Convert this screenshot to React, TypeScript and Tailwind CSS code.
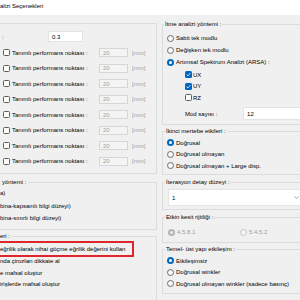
import React from "react";

const T = "font-['Liberation_Sans',Arial,sans-serif] text-[6px] leading-[8px] text-black";

function Radio({ s }: { s: "on" | "off" | "don" | "doff" }) {
  if (s === "on")
    return (
      <span className="flex h-[7px] w-[7px] shrink-0 items-center justify-center rounded-full bg-[#0067c0]">
        <span className="h-[3px] w-[3px] rounded-full bg-white" />
      </span>
    );
  if (s === "don")
    return (
      <span className="flex h-[7px] w-[7px] shrink-0 items-center justify-center rounded-full bg-[#b4b4b4]">
        <span className="h-[3px] w-[3px] rounded-full bg-[#ececec]" />
      </span>
    );
  if (s === "doff")
    return <span className="h-[7px] w-[7px] shrink-0 rounded-full border border-[#c6c6c6] bg-[#f4f4f4]" />;
  return <span className="h-[7px] w-[7px] shrink-0 rounded-full border border-[#6a6a6a] bg-[#f8f8f8]" />;
}

function Check({ on }: { on?: boolean }) {
  if (on)
    return (
      <span className="flex h-[7px] w-[7px] shrink-0 items-center justify-center rounded-[1.5px] bg-[#0067c0]">
        <svg width="7" height="7" viewBox="0 0 7 7">
          <path d="M1.6 3.6 L2.9 4.9 L5.4 2.2" stroke="white" strokeWidth="0.8" fill="none" />
        </svg>
      </span>
    );
  return <span className="h-[7px] w-[7px] shrink-0 rounded-[1.5px] border border-[#5e5e5e] bg-[#fbfbfb]" />;
}

function PerfRow() {
  return (
    <div className="flex h-[15.5px] items-center pl-[6px]">
      <Check />
      <span className="ml-[2px] w-[87px] whitespace-nowrap">Tanımlı performans noktası :</span>
      <span className="flex h-[9px] w-[29px] items-center border border-[#d6d6d6] bg-[#f4f4f4] pl-[3px] text-[#a0a0a0]">20</span>
      <span className="ml-[4px] whitespace-nowrap text-[#a0a0a0]">[mm]</span>
    </div>
  );
}

function RRow({ s, text, h = "h-[11.5px]" }: { s: "on" | "off"; text: string; h?: string }) {
  return (
    <div className={`flex ${h} items-center pl-[4px]`}>
      <Radio s={s} />
      <span className="ml-[2px] whitespace-nowrap">{text}</span>
    </div>
  );
}

function CRow({ on, text }: { on?: boolean; text: string }) {
  return (
    <div className="flex h-[11.5px] items-center pl-[22px]">
      <Check on={on} />
      <span className="ml-[1px] whitespace-nowrap">{text}</span>
    </div>
  );
}

export default function App() {
  return (
    <div className={`${T} flex h-[300px] w-[300px] flex-col overflow-hidden bg-[#f0f0f0]`}>
      <div className="h-[15px] shrink-0 bg-white pt-[2px] whitespace-nowrap">alizi Seçenekleri</div>
      <div className="flex items-start">
        {/* left column */}
        <div className="-ml-[4px] mt-[8px] flex w-[161px] shrink-0 flex-col">
          <div className="h-[151px] border border-[#dcdcdc]">
            <div className="mt-[7px] flex h-[11px] items-center pl-[5px]">
              <span className="w-[46px]">:</span>
              <span className="flex h-[11px] w-[35px] items-center border border-[#e4e4e4] bg-white pl-[3px]">0.3</span>
            </div>
            <div className="mt-[3px]">
              <PerfRow />
              <PerfRow />
              <PerfRow />
              <PerfRow />
              <PerfRow />
              <PerfRow />
              <PerfRow />
              <PerfRow />
            </div>
          </div>
          <div className="mt-[8px] h-[48px] border border-[#dcdcdc]">
            <div className="-mt-[5px] w-fit bg-[#f0f0f0] pl-[5px] pr-[2px] whitespace-nowrap">yöntemi :</div>
            <div className="mt-[1px] flex h-[12px] items-center pl-[3px]">a)</div>
            <div className="mt-[1px] flex h-[12px] items-center pl-[3px] whitespace-nowrap">bina-kapsamlı bilgi düzeyi)</div>
            <div className="flex h-[12px] items-center pl-[3px] whitespace-nowrap">bina-sınırlı bilgi düzeyi)</div>
          </div>
          <div className="mt-[6px] h-[80px] border border-[#dcdcdc]">
            <div className="-mt-[5px] w-fit bg-[#f0f0f0] pl-[3px] pr-[2px] whitespace-nowrap">eri :</div>
            <div className="-mb-[2px] ml-[1px] mt-[1px] flex h-[16px] w-[136px] items-center border-2 border-[#e0262d] whitespace-nowrap">
              eğrilik olarak nihai göçme eğrilik değerini kullan
            </div>
            <div className="flex h-[12px] items-center pl-[3px] whitespace-nowrap">nda çirozları dikkate al</div>
            <div className="flex h-[11.5px] items-center pl-[3px] whitespace-nowrap">e mafsal oluştur</div>
            <div className="flex h-[11.5px] items-center pl-[3px] whitespace-nowrap">irişlerde mafsal oluştur</div>
          </div>
        </div>

        {/* right column */}
        <div className="ml-[5px] mt-[9px] flex w-[150px] shrink-0 flex-col">
          <div className="h-[101px] border border-[#dcdcdc]">
            <div className="-mt-[5px] ml-[1px] w-fit bg-[#f0f0f0] px-[1px] whitespace-nowrap">İtme analizi yöntemi :</div>
            <div className="mt-[4px]">
              <RRow s="off" text="Sabit tek modlu" h="h-[12px]" />
              <RRow s="off" text="Değişken tek modlu" h="h-[12px]" />
              <RRow s="on" text="Artımsal Spektrum Analizi (ARSA) :" h="h-[12px]" />
            </div>
            <div className="mt-[1px]">
              <CRow on text="UX" />
              <CRow on text="UY" />
              <CRow text="RZ" />
            </div>
            <div className="mt-[3.5px] flex h-[13px] items-center pl-[22px]">
              <span className="w-[60px] whitespace-nowrap">Mod sayısı :</span>
              <span className="flex h-[13px] w-[70px] items-center border border-[#e4e4e4] bg-white pl-[3px]">12</span>
            </div>
          </div>

          <div className="mt-[6px] h-[44px] border border-[#dcdcdc]">
            <div className="-mt-[5px] ml-[2px] w-fit bg-[#f0f0f0] px-[1px] whitespace-nowrap">İkinci mertebe etkileri :</div>
            <div className="mt-[2px]">
              <RRow s="on" text="Doğrusal" />
              <RRow s="off" text="Doğrusal olmayan" />
              <RRow s="off" text="Doğrusal olmayan + Large disp." />
            </div>
          </div>

          <div className="mt-[7px] h-[28px] border border-[#dcdcdc]">
            <div className="-mt-[5px] ml-[2px] w-fit bg-[#f0f0f0] px-[1px] whitespace-nowrap">İterasyon detay düzeyi :</div>
            <div className="ml-[5px] mt-[3px] flex h-[17px] w-[134px] items-center justify-between border border-[#e4e4e4] bg-white pl-[3px] pr-[2px]">
              <span>1</span>
              <svg width="5" height="3" viewBox="0 0 5 3">
                <path d="M0.5 0.5 L2.5 2.5 L4.5 0.5" stroke="#7a7a7a" strokeWidth="0.7" fill="none" />
              </svg>
            </div>
          </div>

          <div className="mt-[7px] h-[26px] border border-[#dcdcdc]">
            <div className="-mt-[5px] ml-[2px] w-fit bg-[#f0f0f0] px-[1px] whitespace-nowrap">Etkin kesit rijitliği :</div>
            <div className="mt-[5px] flex h-[12px] items-center pl-[5px] text-[#a0a0a0]">
              <Radio s="don" />
              <span className="ml-[2px] w-[63px]">4.5.8.1</span>
              <Radio s="doff" />
              <span className="ml-[2px]">5.4.5.2</span>
            </div>
          </div>

          <div className="mt-[6px] h-[45px] border border-[#dcdcdc]">
            <div className="-mt-[5px] ml-[2px] w-fit bg-[#f0f0f0] px-[1px] whitespace-nowrap">Temel- üst yapı etkileşim :</div>
            <div className="mt-[2px]">
              <RRow s="on" text="Etkileşimsiz" />
              <RRow s="off" text="Doğrusal winkler" />
              <RRow s="off" text="Doğrusal olmayan winkler (sadece basınç)" />
            </div>
          </div>
        </div>
      </div>
    </div>
  );
}
